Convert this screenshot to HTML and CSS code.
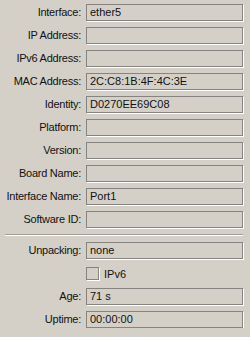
FILE: index.html
```html
<!DOCTYPE html>
<html lang="en">
<head>
    <meta charset="UTF-8">
    <title>Neighbor</title>
    <link rel="stylesheet" href="styles.css">
</head>
<body>
    <div class="form">
        <label class="label">Interface:</label>
        <div class="field">ether5</div>

        <label class="label">IP Address:</label>
        <div class="field"></div>

        <label class="label">IPv6 Address:</label>
        <div class="field"></div>

        <label class="label">MAC Address:</label>
        <div class="field">2C:C8:1B:4F:4C:3E</div>

        <label class="label">Identity:</label>
        <div class="field">D0270EE69C08</div>

        <label class="label">Platform:</label>
        <div class="field"></div>

        <label class="label">Version:</label>
        <div class="field"></div>

        <label class="label">Board Name:</label>
        <div class="field"></div>

        <label class="label">Interface Name:</label>
        <div class="field">Port1</div>

        <label class="label">Software ID:</label>
        <div class="field"></div>

        <!-- separador -->
        <div class="separator"></div>

        <label class="label">Unpacking:</label>
        <div class="field">none</div>

        <div></div>
        <div class="check-row">
            <span class="checkbox"></span>
            <span>IPv6</span>
        </div>

        <label class="label">Age:</label>
        <div class="field">71 s</div>

        <label class="label">Uptime:</label>
        <div class="field">00:00:00</div>
    </div>
</body>
</html>
```

FILE: styles.css
```css
body {
    margin: 0;
    padding: 0;
    background: #d4d0c8;
    font-family: 'Liberation Sans', Arial, sans-serif;
    font-size: 11px;
    color: #111;
}

.form {
    display: grid;
    grid-template-columns: 81px 157px;
    column-gap: 5px;
    row-gap: 6px;
    padding: 4px 7px 0 0;
}

.label {
    text-align: right;
    height: 17px;
    line-height: 17px;
    letter-spacing: -0.25px;
    white-space: nowrap;
}

.field {
    box-sizing: border-box;
    height: 17px;
    line-height: 15px;
    padding: 0 3px;
    background: #d4d0c8;
    border: 1px solid #858480;
    box-shadow: 1px 1px 0 #ffffff;
    white-space: nowrap;
}

.separator {
    grid-column: 1 / 3;
    margin-left: 5px;
    height: 1px;
    background: #a09d97;
    border-bottom: 1px solid #ffffff;
}

.check-row {
    display: flex;
    align-items: center;
    gap: 5px;
    height: 17px;
}

.checkbox {
    box-sizing: border-box;
    width: 13px;
    height: 13px;
    border: 1px solid #858480;
    box-shadow: 1px 1px 0 #ffffff;
}
```
